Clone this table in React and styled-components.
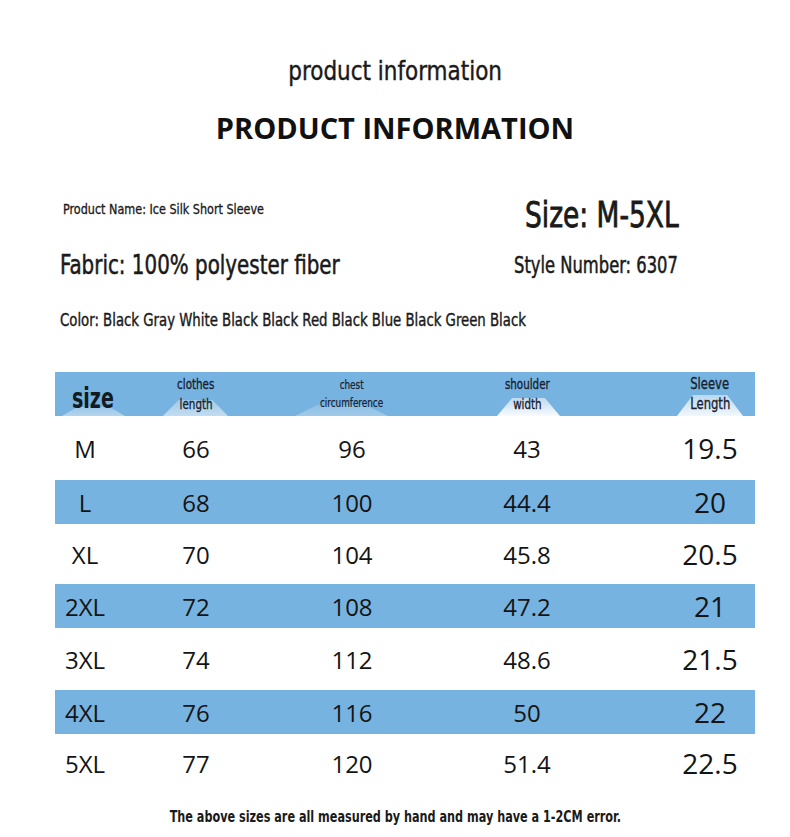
import React from "react";
import styled, { createGlobalStyle } from "styled-components";

const GlobalStyle = createGlobalStyle`
  body {
    margin: 0;
    background: #ffffff;
    font-family: "Open Sans", "Noto Sans", sans-serif;
    color: #161616;
  }
`;

const BLUE = "#77b3e0";
const COLUMNS = "60px 162px 150px 200px 128px";

const Page = styled.div`
  width: 790px;
  height: 837px;
  overflow: hidden;
  background: #ffffff;
  display: flex;
  flex-direction: column;
`;

// narrow text: the reference uses a condensed face, squeeze DejaVu Condensed a bit more
const Squeeze = styled.span`
  display: inline-block;
  white-space: nowrap;
  font-family: "DejaVu Sans Condensed", "DejaVu Sans", sans-serif;
  font-stretch: condensed;
  -webkit-text-stroke: ${(p) => p.$stroke || 0}px currentColor;
  transform: scaleX(${(p) => p.$k || 0.82});
  transform-origin: ${(p) => p.$origin || "left center"};
`;

const Subtitle = styled.div`
  margin-top: 52px;
  height: 36px;
  line-height: 36px;
  font-size: 26px;
  text-align: center;
  color: #1a1a1a;
`;

const Title = styled.h1`
  margin: 20px 0 0;
  height: 40px;
  line-height: 40px;
  font-family: "Open Sans", "Noto Sans", sans-serif;
  font-weight: 700;
  font-size: 29px;
  text-align: center;
  color: #111111;
`;

const Info = styled.div`
  margin-top: 47px;
  display: grid;
  grid-template-columns: 454px 1fr;
  grid-template-rows: 40px 40px 39px;
  row-gap: 10px;
  padding-left: 60px;
`;

const Field = styled.div`
  display: flex;
  align-items: ${(p) => (p.$top && !p.$wide ? "flex-start" : "center")};
  padding-left: ${(p) => p.$indent || 0}px;
  padding-top: ${(p) => p.$top || 0}px;
  font-size: ${(p) => p.$size}px;
  color: #1a1a1a;
  grid-column: ${(p) => (p.$wide ? "1 / span 2" : "auto")};
`;

const Table = styled.div`
  margin: 38px 0 0 55px;
  width: 700px;
  display: flex;
  flex-direction: column;
`;

const GridRow = styled.div`
  display: grid;
  grid-template-columns: ${COLUMNS};
  height: ${(p) => p.$h}px;
  background: ${(p) => (p.$blue ? BLUE : "#ffffff")};
`;

const Cell = styled.div`
  display: flex;
  align-items: center;
  justify-content: center;
  padding-left: ${(p) => (p.$last ? 38 : 0)}px;
  font-family: "Open Sans", "Noto Sans", sans-serif;
  font-size: ${(p) => (p.$last ? 28 : 24)}px;
  color: #141414;
`;

const HeadCell = styled.div`
  position: relative;
  display: flex;
  flex-direction: column;
  align-items: ${(p) => (p.$start ? "flex-start" : "center")};
  justify-content: center;
  padding-left: ${(p) => p.$pad || 0}px;

  &::before {
    content: "";
    position: absolute;
    bottom: 0;
    left: ${(p) => p.$bumpLeft}px;
    width: ${(p) => p.$bumpWidth}px;
    height: ${(p) => p.$bumpHeight}px;
    clip-path: polygon(0 100%, 24% 0, 76% 0, 100% 100%);
    background: linear-gradient(
      to bottom,
      rgba(255, 255, 255, ${(p) => p.$bumpAlpha * 0.55}),
      rgba(255, 255, 255, ${(p) => p.$bumpAlpha})
    );
  }
`;

const HeadLabel = styled.span`
  position: relative;
  z-index: 1;
  font-size: ${(p) => p.$size || 14}px;
  line-height: ${(p) => p.$lh || 19}px;
  color: #17202c;
`;

const SizeLabel = styled.span`
  position: relative;
  z-index: 1;
  margin: 6px 0 0 17px;
  font-size: 29px;
  font-weight: 700;
  line-height: 36px;
  color: #141a22;
`;

const Note = styled.div`
  margin-top: 12px;
  height: 24px;
  line-height: 24px;
  font-size: 16px;
  font-weight: 700;
  text-align: center;
  color: #1a1a1a;
`;

const rows = [
  ["M", "66", "96", "43", "19.5"],
  ["L", "68", "100", "44.4", "20"],
  ["XL", "70", "104", "45.8", "20.5"],
  ["2XL", "72", "108", "47.2", "21"],
  ["3XL", "74", "112", "48.6", "21.5"],
  ["4XL", "76", "116", "50", "22"],
  ["5XL", "77", "120", "51.4", "22.5"],
];

const whiteHeights = [64, 60, 62, 58];

export default function App() {
  return (
    <Page>
      <GlobalStyle />
      <Subtitle>
        <Squeeze $k={0.92} $stroke={0.4} $origin="center">
          product information
        </Squeeze>
      </Subtitle>
      <Title>PRODUCT INFORMATION</Title>

      <Info>
        <Field $size={14} $indent={3} $top={6}>
          <Squeeze $k={0.89} $stroke={0.3}>
            Product Name: Ice Silk Short Sleeve
          </Squeeze>
        </Field>
        <Field $size={35} $indent={11}>
          <Squeeze $k={0.84} $stroke={0.8}>
            Size: M-5XL
          </Squeeze>
        </Field>
        <Field $size={26}>
          <Squeeze $k={0.85} $stroke={0.5}>
            Fabric: 100% polyester fiber
          </Squeeze>
        </Field>
        <Field $size={23}>
          <Squeeze $k={0.79} $stroke={0.5}>
            Style Number: 6307
          </Squeeze>
        </Field>
        <Field $size={18} $wide $top={9}>
          <Squeeze $k={0.82} $stroke={0.4}>
            Color: Black Gray White Black Black Red Black Blue Black Green Black
          </Squeeze>
        </Field>
      </Info>

      <Table>
        <GridRow $blue $h={44}>
          <HeadCell $start $bumpLeft={7} $bumpWidth={63} $bumpHeight={9} $bumpAlpha={0.45}>
            <SizeLabel>
              <Squeeze $k={0.73}>size</Squeeze>
            </SizeLabel>
          </HeadCell>
          <HeadCell $bumpLeft={48} $bumpWidth={65} $bumpHeight={16} $bumpAlpha={0.55}>
            <HeadLabel>
              <Squeeze $origin="center" $stroke={0.3}>clothes</Squeeze>
            </HeadLabel>
            <HeadLabel>
              <Squeeze $origin="center" $stroke={0.3}>length</Squeeze>
            </HeadLabel>
          </HeadCell>
          <HeadCell $bumpLeft={18} $bumpWidth={93} $bumpHeight={11} $bumpAlpha={0.3}>
            <HeadLabel $size={12} $lh={17}>
              <Squeeze $origin="center" $stroke={0.2}>chest</Squeeze>
            </HeadLabel>
            <HeadLabel $size={12} $lh={17}>
              <Squeeze $origin="center" $stroke={0.2}>circumference</Squeeze>
            </HeadLabel>
          </HeadCell>
          <HeadCell $bumpLeft={70} $bumpWidth={63} $bumpHeight={18} $bumpAlpha={0.95}>
            <HeadLabel>
              <Squeeze $origin="center" $stroke={0.3}>shoulder</Squeeze>
            </HeadLabel>
            <HeadLabel>
              <Squeeze $origin="center" $stroke={0.3}>width</Squeeze>
            </HeadLabel>
          </HeadCell>
          <HeadCell $pad={38} $bumpLeft={50} $bumpWidth={66} $bumpHeight={21} $bumpAlpha={0.9}>
            <HeadLabel $size={15}>
              <Squeeze $k={0.86} $origin="center" $stroke={0.3}>Sleeve</Squeeze>
            </HeadLabel>
            <HeadLabel $size={15}>
              <Squeeze $k={0.86} $origin="center" $stroke={0.3}>Length</Squeeze>
            </HeadLabel>
          </HeadCell>
        </GridRow>

        {rows.map((r, i) => {
          const blue = i % 2 === 1;
          return (
            <GridRow key={r[0]} $blue={blue} $h={blue ? 44 : whiteHeights[i / 2]}>
              {r.map((v, j) => (
                <Cell key={j} $last={j === 4}>
                  {v}
                </Cell>
              ))}
            </GridRow>
          );
        })}
      </Table>

      <Note>
        <Squeeze $k={0.78} $origin="center">
          The above sizes are all measured by hand and may have a 1-2CM error.
        </Squeeze>
      </Note>
    </Page>
  );
}
